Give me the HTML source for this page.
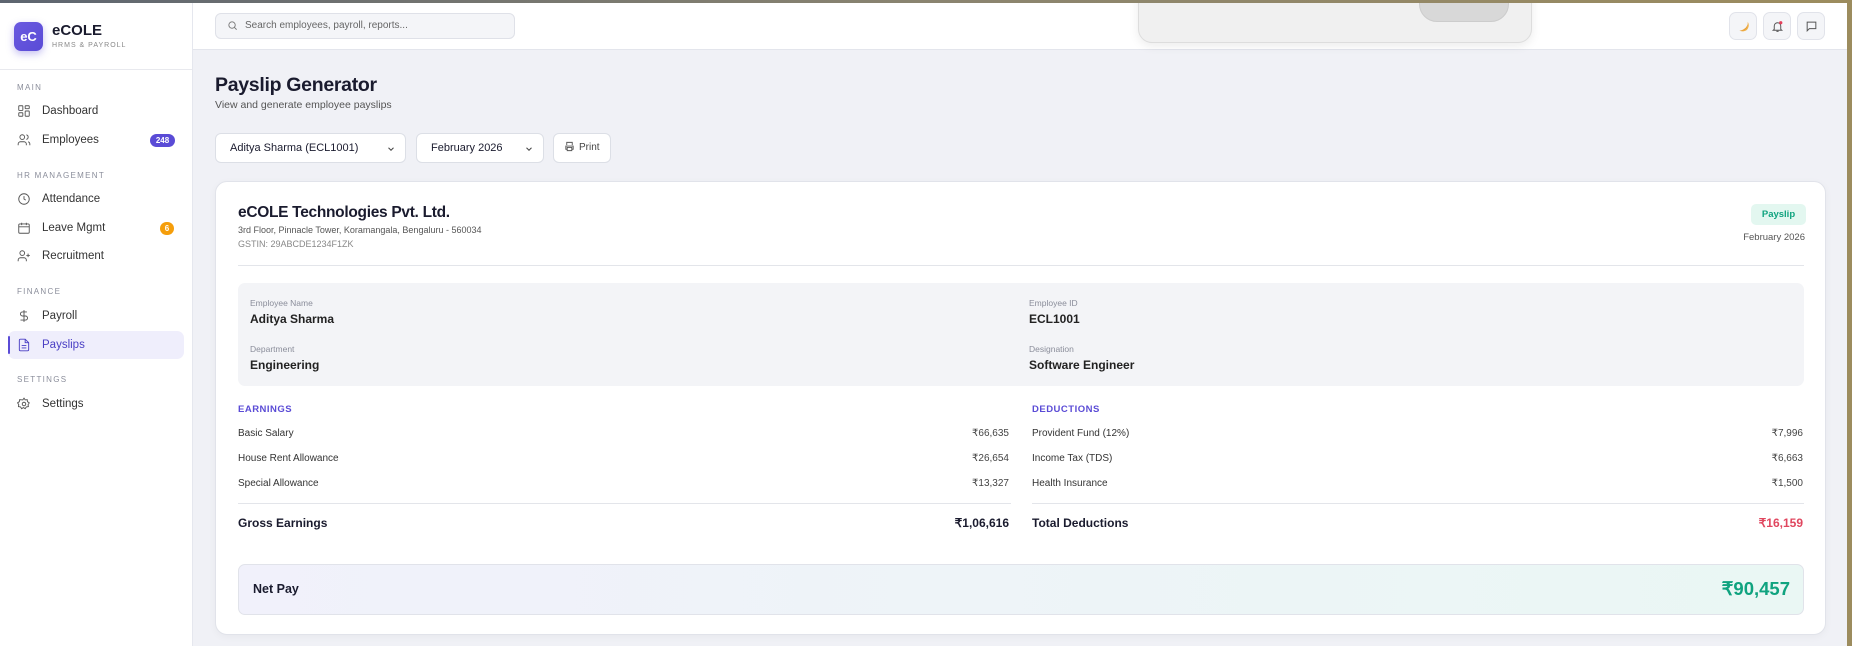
<!DOCTYPE html>
<html><head><meta charset="utf-8"><style>
*{box-sizing:border-box;margin:0;padding:0}
body{width:1852px;height:646px;overflow:hidden;background:#f0f1f6;font-family:"Liberation Sans",sans-serif;color:#1a1b2e;position:relative}
.topline{position:absolute;left:0;top:0;width:1852px;height:3px;background:linear-gradient(90deg,#5d6570,#8a8470 50%,#9c8c5e);z-index:20}
.rightb{position:absolute;right:0;top:0;width:5px;height:646px;background:#9c8c5e;z-index:20}
.side{position:absolute;left:0;top:0;width:193px;height:646px;background:#fff;border-right:1px solid #e5e7ee}
.logo{position:absolute;left:14px;top:22px;width:29px;height:29px;border-radius:7px;background:linear-gradient(135deg,#6a5ae0,#5a4bd6);color:#fff;font-weight:bold;font-size:13px;display:flex;align-items:center;justify-content:center;box-shadow:0 3px 8px rgba(90,75,214,.35)}
.brand{position:absolute;left:52px;top:22px;font-size:15px;font-weight:bold}
.brand small{display:block;font-size:7px;color:#888;letter-spacing:1px;font-weight:normal;margin-top:3px}
.sdiv{position:absolute;left:0;top:69px;width:192px;border-top:1px solid #e8e9ee}
.sec{position:absolute;left:17px;font-size:8px;letter-spacing:1.3px;color:#8a8d9a}
.it{position:absolute;left:17px;font-size:11.5px;color:#333;display:flex;align-items:center;gap:0}
.it svg{width:14px;height:14px;margin-right:11px;stroke:#555;fill:none;stroke-width:1.6}
.badge{position:absolute;font-size:8px;color:#fff;font-weight:bold;border-radius:8px;text-align:center;line-height:13px;height:13px}
.active{position:absolute;left:8px;top:331px;width:176px;height:28px;background:#efeefc;border-radius:7px}
.abar{position:absolute;left:8px;top:336px;width:2px;height:18px;background:#5a4bd6;border-radius:2px}
.top{position:absolute;left:193px;top:3px;width:1654px;height:47px;background:#fff;border-bottom:1px solid #e3e5ec}
.search{position:absolute;left:215px;top:13px;width:300px;height:26px;border:1px solid #dfe1e8;border-radius:6px;background:#f4f5f8;font-size:10px;color:#666;padding-left:29px;line-height:24px}
.search svg{position:absolute;left:11px;top:6px}
.btn{position:absolute;top:12px;width:28px;height:28px;border:1px solid #e1e3ea;border-radius:7px;background:#f4f5f8;display:flex;align-items:center;justify-content:center}
.popup{position:absolute;left:1138px;top:-10px;width:394px;height:53px;background:#f0f0f0;border:1px solid #ddd;border-radius:0 0 14px 14px;box-shadow:0 3px 10px rgba(0,0,0,.08);z-index:15}
.pill{position:absolute;left:280px;top:0;width:90px;height:31px;background:#d8d8d8;border-radius:0 0 18px 18px;border:1px solid #ccc}
h1{position:absolute;left:215px;top:74px;font-size:19.5px;font-weight:bold;letter-spacing:-.3px}
.sub{position:absolute;left:215px;top:99px;font-size:10.5px;color:#555}
.sel{position:absolute;top:133px;height:30px;border:1px solid #dcdfe6;border-radius:6px;background:#fff;font-size:11px;line-height:28px;padding-left:14px}
.sel svg{position:absolute;right:9px;top:10px}
.card{position:absolute;left:215px;top:181px;width:1611px;height:454px;background:#fff;border:1px solid #e1e3ea;border-radius:12px;box-shadow:0 2px 8px rgba(0,0,0,.04)}
.abs{position:absolute}
.lbl{font-size:8.5px;color:#8a8d9a}
.val{font-size:12px;font-weight:bold;color:#222}
.row{position:absolute;font-size:10px;color:#333}
.amt{position:absolute;font-size:10px;color:#444;text-align:right}
.tot{position:absolute;top:334px;font-size:12px;font-weight:bold;line-height:14px}
</style></head><body>
<div class="topline"></div><div class="rightb"></div>
<div class="side">
<div class="logo">eC</div>
<div class="brand">eCOLE<small>HRMS &amp; PAYROLL</small></div>
<div class="sdiv"></div>
<div class="sec" style="top:83px">MAIN</div>
<div class="it" style="top:104px"><svg viewBox="0 0 24 24"><rect x="3" y="3" width="7" height="8" rx="1"/><rect x="14" y="3" width="7" height="5" rx="1"/><rect x="14" y="12" width="7" height="9" rx="1"/><rect x="3" y="15" width="7" height="6" rx="1"/></svg>Dashboard</div>
<div class="it" style="top:133px"><svg viewBox="0 0 24 24"><circle cx="9" cy="7" r="4"/><path d="M2 21v-2a4 4 0 0 1 4-4h6a4 4 0 0 1 4 4v2M16 3.1a4 4 0 0 1 0 7.8M22 21v-2a4 4 0 0 0-3-3.9"/></svg>Employees</div>
<div class="badge" style="left:150px;top:134px;width:25px;background:#5a4bd6">248</div>
<div class="sec" style="top:171px">HR MANAGEMENT</div>
<div class="it" style="top:192px"><svg viewBox="0 0 24 24"><circle cx="12" cy="12" r="9"/><path d="M12 7v5l3 2"/></svg>Attendance</div>
<div class="it" style="top:221px"><svg viewBox="0 0 24 24"><rect x="3" y="5" width="18" height="16" rx="2"/><path d="M3 10h18M8 3v4M16 3v4"/></svg>Leave Mgmt</div>
<div class="badge" style="left:160px;top:222px;width:14px;background:#f59e0b">6</div>
<div class="it" style="top:249px"><svg viewBox="0 0 24 24"><circle cx="9" cy="7" r="4"/><path d="M2 21v-2a4 4 0 0 1 4-4h6a4 4 0 0 1 4 4v2M19 8v6M16 11h6"/></svg>Recruitment</div>
<div class="sec" style="top:287px">FINANCE</div>
<div class="it" style="top:309px"><svg viewBox="0 0 24 24"><path d="M12 2v20M17 5H9.5a3.5 3.5 0 0 0 0 7h5a3.5 3.5 0 0 1 0 7H6"/></svg>Payroll</div>
<div class="active"></div><div class="abar"></div>
<div class="it" style="top:338px;color:#4a3fc4"><svg viewBox="0 0 24 24" style="stroke:#4a3fc4"><path d="M14 2H6a2 2 0 0 0-2 2v16a2 2 0 0 0 2 2h12a2 2 0 0 0 2-2V8z"/><path d="M14 2v6h6M8 13h8M8 17h8"/></svg>Payslips</div>
<div class="sec" style="top:375px">SETTINGS</div>
<div class="it" style="top:397px"><svg viewBox="0 0 24 24"><circle cx="12" cy="12" r="3"/><path d="M12 2l2 3 3.5-.5.5 3.5 3 2-2 3 .5 3.5-3.5.5-2 3-3-2-3 2-2-3-3.5-.5.5-3.5-2-3 3-2 .5-3.5L10 5z"/></svg>Settings</div>
</div>
<div class="top"></div>
<div class="search"><svg width="11" height="11" viewBox="0 0 24 24" fill="none" stroke="#777" stroke-width="2"><circle cx="11" cy="11" r="7"/><path d="M21 21l-5-5"/></svg>Search employees, payroll, reports...</div>
<div class="popup"><div class="pill"></div></div>
<div class="btn" style="left:1729px"><svg width="14" height="14" viewBox="0 0 24 24"><path d="M20 5C22 13 16 21 6 20 9 22 17 22 20 17 23 12 22 8 20 5z" fill="#f0b24a"/><path d="M20 5C21 12 15 19 6 20 9 21 15 20 18 16 20 13 21 9 20 5z" fill="#e8a03a"/></svg></div>
<div class="btn" style="left:1763px"><svg width="13" height="13" viewBox="0 0 24 24" fill="none" stroke="#555" stroke-width="1.8"><path d="M6 17V11a6 6 0 0 1 12 0v6l2 2H4zM10 21h4"/><circle cx="18" cy="5" r="3" fill="#e53e5a" stroke="none"/></svg></div>
<div class="btn" style="left:1797px"><svg width="13" height="13" viewBox="0 0 24 24" fill="none" stroke="#555" stroke-width="1.8"><path d="M4 4h16v12H8l-4 4z"/></svg></div>
<h1>Payslip Generator</h1>
<div class="sub">View and generate employee payslips</div>
<div class="sel" style="left:215px;width:191px">Aditya Sharma (ECL1001)<svg width="10" height="10" viewBox="0 0 24 24" fill="none" stroke="#444" stroke-width="2.5"><path d="M6 9l6 6 6-6"/></svg></div>
<div class="sel" style="left:416px;width:128px">February 2026<svg width="10" height="10" viewBox="0 0 24 24" fill="none" stroke="#444" stroke-width="2.5"><path d="M6 9l6 6 6-6"/></svg></div>
<div class="sel" style="left:553px;width:58px;font-size:10px;padding-left:10px;color:#444"><svg style="position:static;vertical-align:-2px;margin-right:4px" width="11" height="11" viewBox="0 0 24 24" fill="none" stroke="#555" stroke-width="2"><path d="M6 9V3h12v6M6 18H4v-7h16v7h-2M7 14h10v7H7z"/></svg>Print</div>
<div class="card">
<div class="abs" style="left:22px;top:22px;font-size:15.5px;font-weight:bold;letter-spacing:-.3px">eCOLE Technologies Pvt. Ltd.</div>
<div class="abs" style="left:22px;top:43px;font-size:9px;color:#555">3rd Floor, Pinnacle Tower, Koramangala, Bengaluru - 560034</div>
<div class="abs" style="left:22px;top:57px;font-size:9px;color:#888">GSTIN: 29ABCDE1234F1ZK</div>
<div class="abs" style="left:1535px;top:22px;width:55px;height:21px;background:#e3f7f0;border-radius:5px;color:#10a37f;font-size:9.5px;font-weight:bold;text-align:center;line-height:21px">Payslip</div>
<div class="abs" style="right:20px;top:50px;font-size:9.5px;color:#555">February 2026</div>
<div class="abs" style="left:22px;top:83px;width:1566px;border-top:1px solid #e3e5ea"></div>
<div class="abs" style="left:22px;top:101px;width:1566px;height:103px;background:#f3f4f7;border-radius:7px">
<div class="abs lbl" style="left:12px;top:15px">Employee Name</div>
<div class="abs val" style="left:12px;top:29px">Aditya Sharma</div>
<div class="abs lbl" style="left:12px;top:61px">Department</div>
<div class="abs val" style="left:12px;top:75px">Engineering</div>
<div class="abs lbl" style="left:791px;top:15px">Employee ID</div>
<div class="abs val" style="left:791px;top:29px">ECL1001</div>
<div class="abs lbl" style="left:791px;top:61px">Designation</div>
<div class="abs val" style="left:791px;top:75px">Software Engineer</div>
</div>
<div class="abs" style="left:22px;top:222px;font-size:9.5px;font-weight:bold;color:#5a4bd6;letter-spacing:.5px">EARNINGS</div>
<div class="row" style="left:22px;top:246px">Basic Salary</div><div class="amt" style="right:816px;top:246px">₹66,635</div>
<div class="row" style="left:22px;top:271px">House Rent Allowance</div><div class="amt" style="right:816px;top:271px">₹26,654</div>
<div class="row" style="left:22px;top:296px">Special Allowance</div><div class="amt" style="right:816px;top:296px">₹13,327</div>
<div class="abs" style="left:22px;top:321px;width:773px;border-top:1px solid #e3e5ea"></div>
<div class="tot" style="left:22px">Gross Earnings</div>
<div class="tot" style="right:816px">₹1,06,616</div>
<div class="abs" style="left:816px;top:222px;font-size:9.5px;font-weight:bold;color:#5a4bd6;letter-spacing:.5px">DEDUCTIONS</div>
<div class="row" style="left:816px;top:246px">Provident Fund (12%)</div><div class="amt" style="right:22px;top:246px">₹7,996</div>
<div class="row" style="left:816px;top:271px">Income Tax (TDS)</div><div class="amt" style="right:22px;top:271px">₹6,663</div>
<div class="row" style="left:816px;top:296px">Health Insurance</div><div class="amt" style="right:22px;top:296px">₹1,500</div>
<div class="abs" style="left:816px;top:321px;width:772px;border-top:1px solid #e3e5ea"></div>
<div class="tot" style="left:816px">Total Deductions</div>
<div class="tot" style="right:22px;color:#e0475f">₹16,159</div>
<div class="abs" style="left:22px;top:382px;width:1566px;height:51px;border:1px solid #e1e3ea;border-radius:7px;background:linear-gradient(90deg,#f1f1fb,#eaf7f4)">
<div class="abs" style="left:14px;top:17px;font-size:12.5px;font-weight:bold">Net Pay</div>
<div class="abs" style="right:13px;top:13px;font-size:18.5px;font-weight:bold;color:#10a37f">₹90,457</div>
</div>
</div>
</body></html>
